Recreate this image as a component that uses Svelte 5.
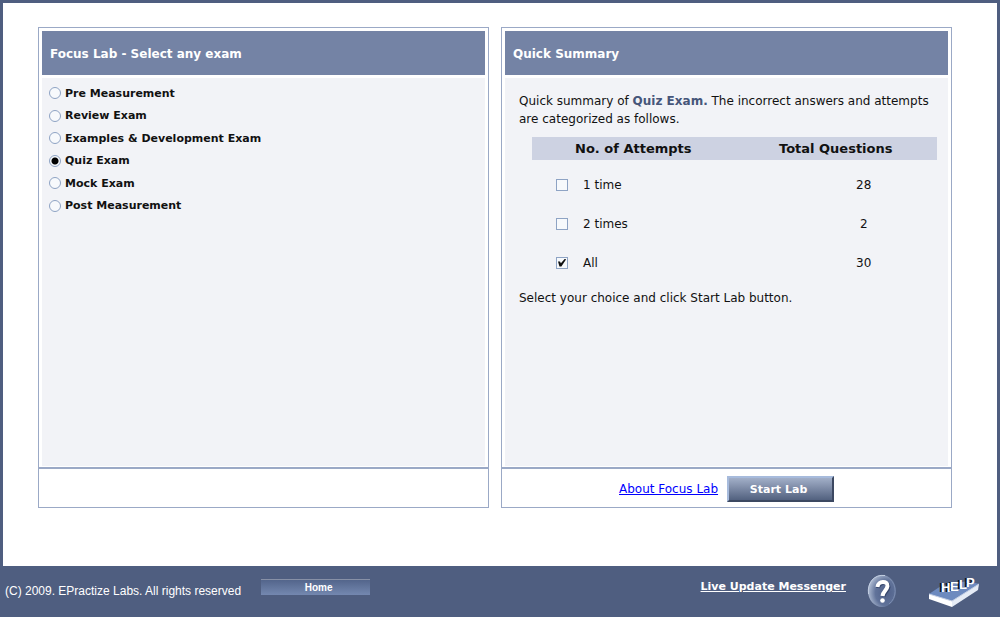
<script lang="ts">
  type Attempt = { label: string; total: number };

  const exams: string[] = [
    'Pre Measurement',
    'Review Exam',
    'Examples & Development Exam',
    'Quiz Exam',
    'Mock Exam',
    'Post Measurement',
  ];

  const attempts: Attempt[] = [
    { label: '1 time', total: 28 },
    { label: '2 times', total: 2 },
    { label: 'All', total: 30 },
  ];

  let selectedExam: string = $state('Quiz Exam');
  let selectedAttempts: string[] = $state(['All']);
</script>

<div class="page">
  <main class="panels">
    <!-- Exam picker -->
    <section class="panel">
      <div class="panel-main">
        <h2 class="panel-title">Focus Lab - Select any exam</h2>
        <div class="panel-body">
          <div class="exam-list" role="radiogroup" aria-label="Select any exam">
            {#each exams as exam (exam)}
              <label class="exam">
                <input type="radio" name="exam" value={exam} bind:group={selectedExam} />
                <span>{exam}</span>
              </label>
            {/each}
          </div>
        </div>
      </div>
      <div class="panel-footer"></div>
    </section>

    <!-- Summary of the chosen exam -->
    <section class="panel">
      <div class="panel-main">
        <h2 class="panel-title">Quick Summary</h2>
        <div class="panel-body summary">
          <p class="intro">
            Quick summary of <strong>{selectedExam}.</strong> The incorrect answers and attempts are categorized as follows.
          </p>
          <table class="attempts">
            <thead>
              <tr><th>No. of Attempts</th><th>Total Questions</th></tr>
            </thead>
            <tbody>
              {#each attempts as attempt (attempt.label)}
                <tr>
                  <td>
                    <label class="attempt">
                      <input type="checkbox" value={attempt.label} bind:group={selectedAttempts} />
                      <span>{attempt.label}</span>
                    </label>
                  </td>
                  <td class="total">{attempt.total}</td>
                </tr>
              {/each}
            </tbody>
          </table>
          <p class="note">Select your choice and click Start Lab button.</p>
        </div>
      </div>
      <div class="panel-footer">
        <a class="about" href="#about">About Focus Lab</a>
        <button class="btn-start" type="button">Start Lab</button>
      </div>
    </section>
  </main>

  <footer class="bottom-bar">
    <span class="copyright">(C) 2009. EPractize Labs. All rights reserved</span>
    <button class="btn-home" type="button">Home</button>
    <a class="messenger" href="#messenger">Live Update Messenger</a>
    <a class="icon-link" href="#support" aria-label="Support">
      <svg width="32" height="34" viewBox="0 0 32 34">
        <defs>
          <radialGradient id="orb" cx="66%" cy="56%" r="66%">
            <stop offset="0" stop-color="#4f6089" />
            <stop offset="0.6" stop-color="#61739a" />
            <stop offset="1" stop-color="#aebbd2" />
          </radialGradient>
        </defs>
        <ellipse cx="16" cy="17" rx="14" ry="16" fill="url(#orb)" />
        <path d="M19 1.500 C8 0 1 9 2.500 20" fill="none" stroke="#c3cfe2" stroke-width="1" />
        <path d="M24 5 C31 11 31 24 23 30" fill="none" stroke="#7c8db0" stroke-width="1" />
        <path
          d="M12 14 C13 7.500 23 7.500 22.500 13 C22 17.500 18 18 17.500 22.500"
          fill="none" stroke="#35456b" stroke-width="4"
        />
        <path
          d="M11.500 13 C12 6.500 22 6.500 21.500 12 C21 16.500 17 17 16.500 22"
          fill="none" stroke="#fff" stroke-width="4"
        />
        <circle cx="16.500" cy="26.500" r="2.300" fill="#fff" />
      </svg>
    </a>
    <a class="icon-link" href="#help" aria-label="Help">
      <svg width="52" height="34" viewBox="0 0 52 34">
        <path d="M1 20 L13 12 L40 7 L51 10 L24 27 Z" fill="#6d8abf" />
        <path d="M1 20 L24 27 L24 33 L1 25 Z" fill="#fff" />
        <path d="M24 27 L51 10 L50 16 L24 33 Z" fill="#e6ecf6" />
        <path d="M1 20 L24 27 L51 10" fill="none" stroke="#c5d0e6" stroke-width="1" />
        <g class="help-word">
          <text x="11 20 29 36" y="18 17 15 13" fill="#10141f">HELP</text>
          <text x="13 22 31 38" y="18 17 15 13" fill="#fff">HELP</text>
        </g>
      </svg>
    </a>
  </footer>
</div>

<style>
  :global(body) { margin: 0; background: #4f5e80; }

  .page {
    --slate: #4f5e80;
    --line: #9ba9c6;
    --title: #7483a5;
    --pane: #f2f3f7;
    box-sizing: border-box;
    min-height: 100vh;
    display: flex;
    flex-direction: column;
    padding: 3px 3px 0;
    background: var(--slate);
    font-family: Verdana, "DejaVu Sans", sans-serif;
    font-size: 12px;
    color: #111;
  }

  .panels {
    flex: 1;
    display: grid;
    grid-template-columns: 1fr 1fr;
    gap: 12px;
    padding: 24px 45px 58px 35px;
    background: #fff;
  }
  .panel {
    display: flex;
    flex-direction: column;
    border: 1px solid var(--line);
  }
  .panel-main {
    flex: 1;
    display: flex;
    flex-direction: column;
    gap: 3px;
    padding: 3px 3px 1px;
  }
  .panel-title {
    margin: 0;
    padding: 2px 8px 0;
    background: var(--title);
    color: #fff;
    font-size: 12px;
    line-height: 42px;
  }
  .panel-body {
    flex: 1;
    background: var(--pane);
  }
  .panel-footer {
    box-sizing: border-box;
    display: flex;
    align-items: center;
    gap: 9px;
    height: 40px;
    padding: 2px 0 0 117px;
    border-top: 2px solid var(--line);
  }

  input {
    appearance: none;
    box-sizing: border-box;
    flex-shrink: 0;
    width: 12px;
    height: 12px;
    margin: 0;
    border: 1px solid #8ea3c4;
    background: #f7f9fc;
  }

  .exam-list {
    display: grid;
    grid-auto-rows: 1fr;
    height: 135px;
    padding: 4px 7px;
  }
  .exam {
    display: flex;
    align-items: center;
    gap: 4px;
    font-size: 11px;
    font-weight: bold;
  }
  .exam input { border-radius: 50%; }
  .exam input:checked { background: radial-gradient(circle, #000 3px, #f7f9fc 4px); }

  .summary { padding: 14px 0 0 14px; }
  .intro, .note { margin: 0; line-height: 18px; }
  .intro { padding: 0 14px 9px 0; }
  .intro strong { color: #46567a; }

  .attempts {
    width: calc(100% - 24px);
    margin-left: 13px;
    border-collapse: collapse;
    table-layout: fixed;
  }
  .attempts th {
    height: 23px;
    padding: 0;
    background: #cdd2e2;
    font-size: 13px;
    text-align: center;
  }
  .attempts td {
    height: 39px;
    padding: 0;
  }
  .attempts tbody { border-top: 5px solid var(--pane); }
  .attempt {
    display: flex;
    align-items: center;
    gap: 15px;
    padding-left: 24px;
  }
  .attempt input { padding: 1px; }
  .attempt input:checked::after {
    content: '';
    display: block;
    width: 8px;
    height: 8px;
    background: #111;
    clip-path: polygon(0 38%, 25% 38%, 36% 58%, 88% 0, 100% 12%, 42% 100%, 18% 100%);
  }
  .attempts .total {
    padding-left: 56px;
    text-align: center;
  }
  .note { padding-top: 7px; }

  .about { color: #00f; }
  .btn-start {
    width: 107px;
    height: 26px;
    padding: 0 4px 0 0;
    border: 2px solid;
    border-color: #a7bbdc #3c4861 #3c4861 #a7bbdc;
    background: linear-gradient(#a2afc8, #52617f);
    color: #fff;
    font: bold 11px Verdana, "DejaVu Sans", sans-serif;
  }

  .bottom-bar {
    box-sizing: border-box;
    display: flex;
    align-items: center;
    height: 51px;
    padding: 0 17px 2px 2px;
    color: #fff;
  }
  .copyright { font: 12px "Liberation Sans", Arial, sans-serif; }
  .btn-home {
    width: 109px;
    height: 16px;
    margin: 0 auto 8px 20px;
    padding: 0 0 0 6px;
    border: 0;
    border-top: 1px solid #8790a6;
    background: linear-gradient(#53658b, #7488b0);
    color: #fff;
    font: bold 10px "Liberation Sans", Arial, sans-serif;
  }
  .messenger {
    margin: 0 20px 8px 0;
    color: #fff;
    font-size: 11px;
    font-weight: bold;
  }
  .icon-link { display: flex; }
  .icon-link + .icon-link { margin-left: 30px; }
  .help-word { font: bold 13px "Liberation Sans", Arial, sans-serif; }
</style>
